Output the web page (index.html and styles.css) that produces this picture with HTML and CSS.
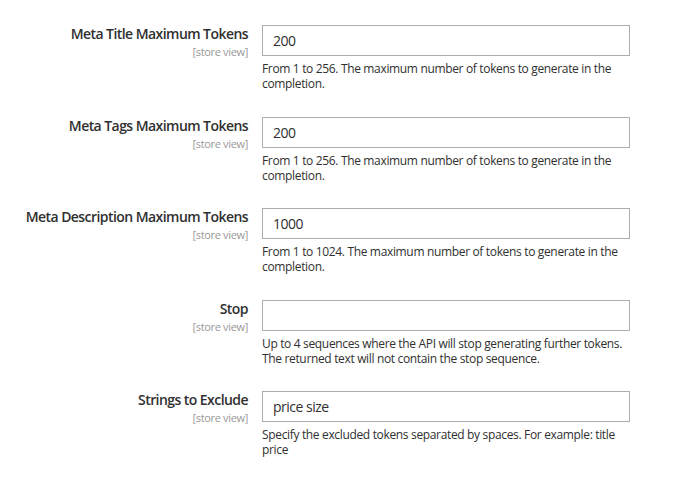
FILE: index.html
```html
<!DOCTYPE html>
<html>
<head>
<meta charset="utf-8">
<link rel="stylesheet" href="styles.css">
</head>
<body>
<div class="form">
  <div class="row">
    <div class="label"><span class="title">Meta Title Maximum Tokens</span><span class="scope">[store view]</span></div>
    <div class="control">
      <div class="input">200</div>
      <div class="note">From 1 to 256. The maximum number of tokens to generate in the completion.</div>
    </div>
  </div>
  <div class="row">
    <div class="label"><span class="title">Meta Tags Maximum Tokens</span><span class="scope">[store view]</span></div>
    <div class="control">
      <div class="input">200</div>
      <div class="note">From 1 to 256. The maximum number of tokens to generate in the completion.</div>
    </div>
  </div>
  <div class="row">
    <div class="label"><span class="title">Meta Description Maximum Tokens</span><span class="scope">[store view]</span></div>
    <div class="control">
      <div class="input">1000</div>
      <div class="note">From 1 to 1024. The maximum number of tokens to generate in the completion.</div>
    </div>
  </div>
  <div class="row">
    <div class="label"><span class="title">Stop</span><span class="scope">[store view]</span></div>
    <div class="control">
      <div class="input"></div>
      <div class="note">Up to 4 sequences where the API will stop generating further tokens. The returned text will not contain the stop sequence.</div>
    </div>
  </div>
  <div class="row">
    <div class="label"><span class="title">Strings to Exclude</span><span class="scope">[store view]</span></div>
    <div class="control">
      <div class="input">price size</div>
      <div class="note">Specify the excluded tokens separated by spaces. For example: title price</div>
    </div>
  </div>
</div>
</body>
</html>
```

FILE: styles.css
```css
html, body {
  margin: 0;
  padding: 0;
  background: #fff;
}
body {
  font-family: "Open Sans", "Liberation Sans", sans-serif;
  color: #303030;
}
.form {
  padding-top: 25px;
}
.row {
  display: grid;
  grid-template-columns: 248px 368px;
  column-gap: 14px;
  height: 91.5px;
}
.label {
  display: flex;
  flex-direction: column;
  align-items: flex-end;
  text-align: right;
}
.title {
  font-size: 14px;
  font-weight: 600;
  line-height: 18px;
  letter-spacing: -0.56px;
  color: #303030;
}
.scope {
  font-size: 11px;
  line-height: 14px;
  letter-spacing: -0.33px;
  color: #999;
  margin-top: 2px;
}
.input {
  box-sizing: border-box;
  height: 31px;
  border: 1px solid #adadad;
  padding: 0 10px;
  font-size: 14px;
  line-height: 29px;
  letter-spacing: -0.5px;
  color: #303030;
}
.note {
  margin-top: 5px;
  font-size: 12px;
  line-height: 15px;
  letter-spacing: -0.34px;
  color: #303030;
  padding-right: 2px;
}
```
